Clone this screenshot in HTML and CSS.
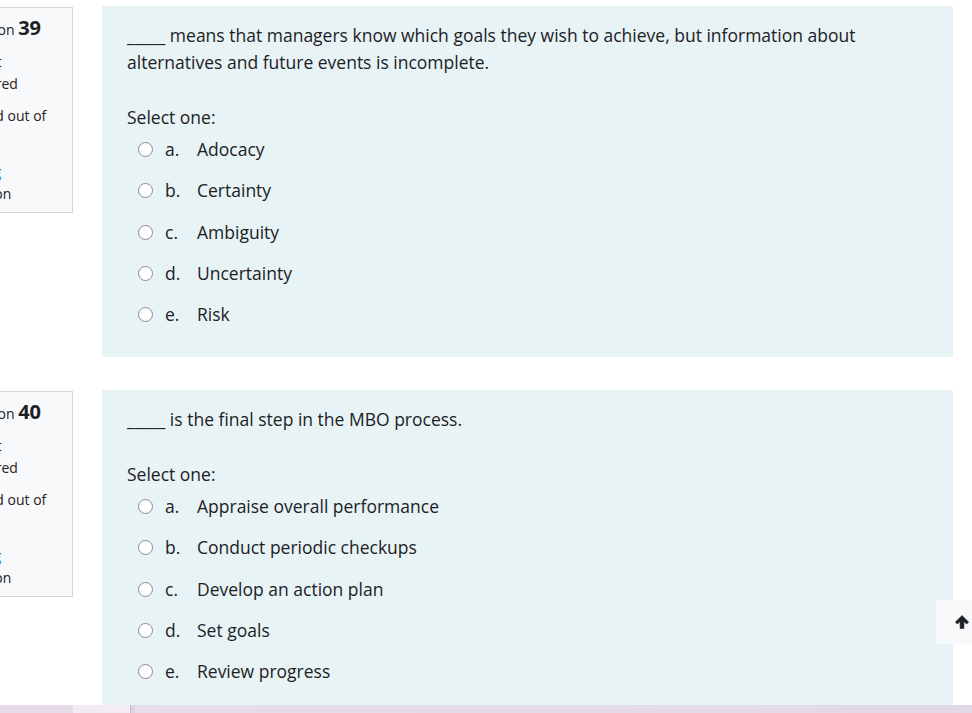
FILE: index.html
```html
<!DOCTYPE html>
<html lang="en">
<head>
<meta charset="utf-8">
<title>Quiz</title>
<link rel="stylesheet" href="styles.css">
</head>
<body>
<div class="page">
  <div class="que">
    <div class="info">
      <h3 class="qno">Question <span class="num">39</span></h3>
      <div class="state">Not yet answered</div>
      <div class="grade">Marked out of 1.00</div>
      <div class="flag"><span class="flagicon"></span><span class="flaglink">Flag</span> question</div>
    </div>
    <div class="content">
      <div class="qtext">_____ means that managers know which goals they wish to achieve, but information about alternatives and future events is incomplete.</div>
      <div class="prompt">Select one:</div>
      <div class="answer">
        <label class="opt"><span class="radio"></span><span class="letter">a.</span><span class="lbl">Adocacy</span></label>
        <label class="opt"><span class="radio"></span><span class="letter">b.</span><span class="lbl">Certainty</span></label>
        <label class="opt"><span class="radio"></span><span class="letter">c.</span><span class="lbl">Ambiguity</span></label>
        <label class="opt"><span class="radio"></span><span class="letter">d.</span><span class="lbl">Uncertainty</span></label>
        <label class="opt"><span class="radio"></span><span class="letter">e.</span><span class="lbl">Risk</span></label>
      </div>
    </div>
  </div>
  <div class="que">
    <div class="info">
      <h3 class="qno">Question <span class="num">40</span></h3>
      <div class="state">Not yet answered</div>
      <div class="grade">Marked out of 1.00</div>
      <div class="flag"><span class="flagicon"></span><span class="flaglink">Flag</span> question</div>
    </div>
    <div class="content">
      <div class="qtext">_____ is the final step in the MBO process.</div>
      <div class="prompt">Select one:</div>
      <div class="answer">
        <label class="opt"><span class="radio"></span><span class="letter">a.</span><span class="lbl">Appraise overall performance</span></label>
        <label class="opt"><span class="radio"></span><span class="letter">b.</span><span class="lbl">Conduct periodic checkups</span></label>
        <label class="opt"><span class="radio"></span><span class="letter">c.</span><span class="lbl">Develop an action plan</span></label>
        <label class="opt"><span class="radio"></span><span class="letter">d.</span><span class="lbl">Set goals</span></label>
        <label class="opt"><span class="radio"></span><span class="letter">e.</span><span class="lbl">Review progress</span></label>
      </div>
    </div>
  </div>
</div>
<a class="totop" href="#"><svg width="14" height="14" viewBox="0 0 14 14"><path d="M7 0.6 L13.6 7.1 L11.6 9.1 L8.9 6.4 L8.9 13.6 L5.1 13.6 L5.1 6.4 L2.4 9.1 L0.4 7.1 Z" fill="#1d2125" stroke="#1d2125" stroke-width="0.6" stroke-linejoin="round"/></svg></a>
<div class="footer"><span class="f1"></span><span class="f2"></span><span class="f3"></span><span class="f4"></span></div>
</body>
</html>
```
FILE: styles.css
```css
html, body {
  margin: 0;
  padding: 0;
  background: #fff;
  overflow: hidden;
}
body {
  font-family: "Open Sans", "Noto Sans", sans-serif;
  color: #1d2125;
}
.page {
  display: flex;
  flex-direction: column;
  gap: 33px;
  padding-top: 6px;
}
.que {
  display: flex;
  align-items: flex-start;
}
.info {
  box-sizing: border-box;
  width: 128px;
  flex: none;
  margin-left: -55px;
  margin-top: 1px;
  margin-right: 29px;
  background: #f8f9fa;
  border: 1px solid #d3d7db;
  padding: 7px 8px 7px 8px;
  font-size: 14px;
  line-height: 22px;
}
.qno {
  margin: 0 0 8px 0;
  padding-left: 1px;
  font-weight: 400;
  font-size: 14px;
  line-height: 26px;
  white-space: nowrap;
}
.num {
  font-weight: 700;
  font-size: 20px;
}
.state { margin-bottom: 10px; }
.grade { margin-bottom: 12px; }
.flag { max-width: 80px; }
.flagicon {
  display: inline-block;
  width: 18px;
  height: 10px;
  margin-right: 3px;
}
.flaglink { color: #0f6cbf; }
.content {
  flex: 1;
  margin-right: 19px;
  background: #e7f3f5;
  padding: 16px 25px 29px 25px;
  font-size: 17.5px;
  line-height: 27px;
}
.prompt { margin-top: 28px; }
.answer {
  display: flex;
  flex-direction: column;
  gap: 14.3px;
  margin-top: 5px;
}
.opt {
  display: flex;
  align-items: center;
  padding-left: 11px;
}
.radio {
  box-sizing: border-box;
  width: 15px;
  height: 15px;
  border: 1.6px solid #8a8a8a;
  border-radius: 50%;
  background: #fff;
  margin-right: 12px;
}
.letter { width: 32px; }
.totop {
  position: fixed;
  right: 0;
  top: 600px;
  width: 36px;
  height: 44px;
  background: #f8f9fa;
  display: flex;
  align-items: center;
  padding-left: 19px;
  box-sizing: border-box;
}
.footer {
  position: fixed;
  left: 0;
  right: 0;
  bottom: 0;
  height: 8px;
  display: flex;
}
.f1 { width: 73px; background: #e8dbe9; }
.f2 { width: 57px; background: #f3ebf3; }
.f3 { width: 5px; background: #e0d3e0; border-left: 1px solid #c8bcc8; box-sizing: border-box; }
.f4 { flex: 1; background: linear-gradient(90deg, #e9dce9, #e3d8e8); }
```
